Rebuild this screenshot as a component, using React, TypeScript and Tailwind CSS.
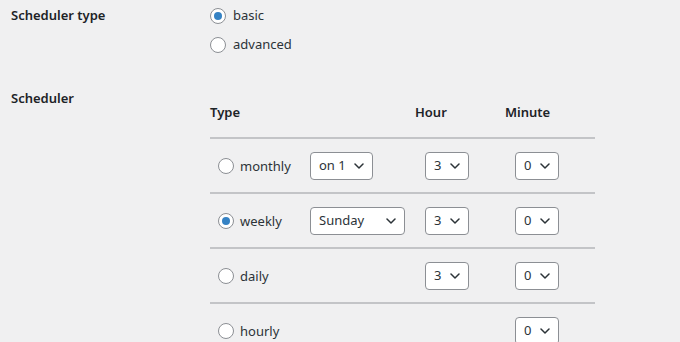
function Radio({ checked = false }: { checked?: boolean }) {
  return (
    <span className="flex h-4 w-4 shrink-0 items-center justify-center rounded-full border border-[#8c8f94] bg-white">
      {checked && <span className="h-2 w-2 rounded-full bg-[#3582c4]" />}
    </span>
  );
}

function Select({ value, width }: { value: string; width: string }) {
  return (
    <div
      className={`flex h-[28px] items-center justify-between rounded-[4px] border border-[#8c8f94] bg-white pl-[8px] pr-[8px] text-[13px] text-[#2c3338] ${width}`}
    >
      <span>{value}</span>
      <svg width="10" height="6" viewBox="0 0 10 6" fill="none">
        <path d="M1 1l4 4 4-4" stroke="#2c3338" strokeWidth="1.5" strokeLinecap="round" strokeLinejoin="round" />
      </svg>
    </div>
  );
}

const ROWS = [
  { label: 'monthly', day: { value: 'on 1', width: 'w-[63px]' }, hour: '3', checked: false },
  { label: 'weekly', day: { value: 'Sunday', width: 'w-[95px]' }, hour: '3', checked: true },
  { label: 'daily', day: null, hour: '3', checked: false },
  { label: 'hourly', day: null, hour: null, checked: false },
];

export default function App() {
  return (
    <div
      className="h-[342px] w-[680px] overflow-hidden bg-[#f0f0f1] text-[13px] text-[#2c3338]"
      style={{ fontFamily: '"Noto Sans", "Open Sans", sans-serif' }}
    >
      <div className="flex pt-[1px]">
        <div className="w-[210px] pl-[11px] text-[13px] font-semibold leading-[29px] text-[#1d2327]">Scheduler type</div>
        <div className="flex flex-col">
          <label className="flex h-[29px] items-center gap-[7px]">
            <Radio checked />
            <span>basic</span>
          </label>
          <label className="flex h-[29px] items-center gap-[7px]">
            <Radio />
            <span>advanced</span>
          </label>
        </div>
      </div>

      <div className="mt-[27px] flex">
        <div className="w-[210px] pl-[11px] text-[13px] font-semibold leading-[24px] text-[#1d2327]">Scheduler</div>
        <div className="mt-[7px] w-[385px]">
          <div className="flex h-[44px] items-start pt-[10px] font-semibold text-[#1d2327]">
            <div className="w-[205px]">Type</div>
            <div className="w-[90px]">Hour</div>
            <div>Minute</div>
          </div>
          {ROWS.map((row) => (
            <div key={row.label} className="flex h-[55px] items-center border-t-2 border-[#c3c4c7]">
              <label className="flex w-[100px] items-center gap-[6px] pl-[8px]">
                <Radio checked={row.checked} />
                <span className="pt-[2px]">{row.label}</span>
              </label>
              <div className="w-[105px]">{row.day && <Select value={row.day.value} width={row.day.width} />}</div>
              <div className="w-[90px] pl-[10px]">{row.hour && <Select value={row.hour} width="w-[44px]" />}</div>
              <div className="pl-[10px]">
                <Select value="0" width="w-[44px]" />
              </div>
            </div>
          ))}
        </div>
      </div>
    </div>
  );
}
